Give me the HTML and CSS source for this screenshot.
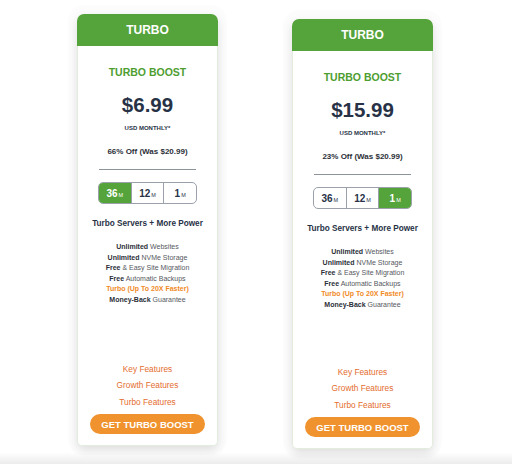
FILE: index.html
```html
<!DOCTYPE html>
<html lang="en">
<head>
    <meta charset="UTF-8">
    <meta name="viewport" content="width=device-width, initial-scale=1.0">
    <title>Turbo Plans</title>
    <link rel="stylesheet" href="styles.css">
</head>
<body>
    <div class="plans">
        <!-- 36 month plan -->
        <div class="plan">
            <div class="plan-head">TURBO</div>
            <div class="plan-body">
                <div class="plan-name">TURBO BOOST</div>
                <div class="price">$6.99</div>
                <div class="period">USD MONTHLY*</div>
                <div class="discount">66% Off (Was $20.99)</div>
                <div class="divider"></div>
                <div class="terms">
                    <span class="term active">36<small>M</small></span>
                    <span class="term">12<small>M</small></span>
                    <span class="term">1<small>M</small></span>
                </div>
                <div class="tagline">Turbo Servers + More Power</div>
                <ul class="features">
                    <li><b>Unlimited</b> Websites</li>
                    <li><b>Unlimited</b> NVMe Storage</li>
                    <li><b>Free</b> &amp; Easy Site Migration</li>
                    <li><b>Free</b> Automatic Backups</li>
                    <li class="hot"><b>Turbo (Up To 20X Faster)</b></li>
                    <li><b>Money-Back</b> Guarantee</li>
                </ul>
                <div class="plan-foot">
                    <a class="more" href="#">Key Features</a>
                    <a class="more" href="#">Growth Features</a>
                    <a class="more" href="#">Turbo Features</a>
                    <button class="buy-btn">GET TURBO BOOST</button>
                </div>
            </div>
        </div>

        <!-- 1 month plan -->
        <div class="plan plan-monthly">
            <div class="plan-head">TURBO</div>
            <div class="plan-body">
                <div class="plan-name">TURBO BOOST</div>
                <div class="price">$15.99</div>
                <div class="period">USD MONTHLY*</div>
                <div class="discount">23% Off (Was $20.99)</div>
                <div class="divider"></div>
                <div class="terms">
                    <span class="term">36<small>M</small></span>
                    <span class="term">12<small>M</small></span>
                    <span class="term active">1<small>M</small></span>
                </div>
                <div class="tagline">Turbo Servers + More Power</div>
                <ul class="features">
                    <li><b>Unlimited</b> Websites</li>
                    <li><b>Unlimited</b> NVMe Storage</li>
                    <li><b>Free</b> &amp; Easy Site Migration</li>
                    <li><b>Free</b> Automatic Backups</li>
                    <li class="hot"><b>Turbo (Up To 20X Faster)</b></li>
                    <li><b>Money-Back</b> Guarantee</li>
                </ul>
                <div class="plan-foot">
                    <a class="more" href="#">Key Features</a>
                    <a class="more" href="#">Growth Features</a>
                    <a class="more" href="#">Turbo Features</a>
                    <button class="buy-btn">GET TURBO BOOST</button>
                </div>
            </div>
        </div>
    </div>
</body>
</html>
```

FILE: styles.css
```css
body {
    font-family: "Liberation Sans", Arial, sans-serif;
    margin: 0;
    height: 464px;
    background: linear-gradient(to bottom, #ffffff 452px, #ececec 464px);
    color: #283246;
    overflow: hidden;
}

/* Two plan cards side by side */
.plans {
    display: flex;
    justify-content: center;
    align-items: flex-start;
    gap: 74px;
    padding: 14px 2px 0 0;
}

.plan {
    width: 141px;
    height: 432px;
    display: flex;
    flex-direction: column;
    border-radius: 7px;
    box-shadow: 0 4px 10px rgba(0, 0, 0, 0.12), 0 0 0 9px rgba(0, 0, 0, 0.012);
}

.plan-monthly {
    margin-top: 5px;
    height: 430px;
}

/* Green header */
.plan-head {
    height: 32px;
    line-height: 32px;
    background-color: #55a33b;
    color: white;
    font-size: 12px;
    font-weight: bold;
    text-align: center;
    border-radius: 7px 7px 0 0;
}

.plan-body {
    flex-grow: 1;
    display: flex;
    flex-direction: column;
    align-items: center;
    background: white;
    border: 1px solid #e3edde;
    border-top: none;
    border-radius: 0 0 5px 5px;
    padding: 0 0 11px;
    text-align: center;
}

.plan-name {
    margin-top: 19px;
    line-height: 14px;
    font-size: 10.5px;
    font-weight: bold;
    color: #4e9e2f;
}

.price {
    margin-top: 14px;
    line-height: 24px;
    font-size: 20.5px;
    font-weight: bold;
}

.period {
    margin-top: 7px;
    line-height: 8px;
    font-size: 6px;
    font-weight: bold;
}

.discount {
    margin-top: 15px;
    line-height: 10px;
    font-size: 8px;
    font-weight: bold;
    color: #2b2f38;
}

.divider {
    margin-top: 12px;
    width: 97px;
    height: 1px;
    background-color: #8d939b;
}

/* Term switcher */
.terms {
    margin-top: 12px;
    display: flex;
    width: 99px;
    height: 22px;
    box-sizing: border-box;
    border: 1px solid #9aa1aa;
    border-radius: 5px;
    overflow: hidden;
}

.term {
    flex: 1;
    display: flex;
    justify-content: center;
    align-items: center;
    font-size: 10px;
    font-weight: bold;
    color: #283246;
    border-left: 1px solid #9aa1aa;
}

.term:first-child {
    border-left: none;
}

.term small {
    font-size: 5.5px;
    font-weight: normal;
    margin-left: 1px;
    margin-top: 3px;
}

.term.active {
    background-color: #55a33b;
    color: white;
}

.tagline {
    margin-top: 14px;
    line-height: 12px;
    font-size: 8.2px;
    font-weight: bold;
}

.features {
    list-style: none;
    margin: 12px 0 0;
    padding: 0;
    font-size: 7px;
    line-height: 10.5px;
    color: #555860;
}

.features b {
    color: #2b2f38;
}

.features .hot b {
    color: #f08a1f;
}

/* Links and buy button pinned to the bottom */
.plan-foot {
    margin-top: auto;
    display: flex;
    flex-direction: column;
    align-items: center;
}

.more {
    font-size: 8.3px;
    line-height: 16.5px;
    color: #e46c2e;
    text-decoration: none;
}

.buy-btn {
    margin-top: 4px;
    width: 115px;
    height: 20px;
    padding: 0;
    border: none;
    border-radius: 10px;
    background-color: #f0932e;
    color: white;
    font-family: inherit;
    font-size: 9.5px;
    font-weight: bold;
    cursor: pointer;
}
```
